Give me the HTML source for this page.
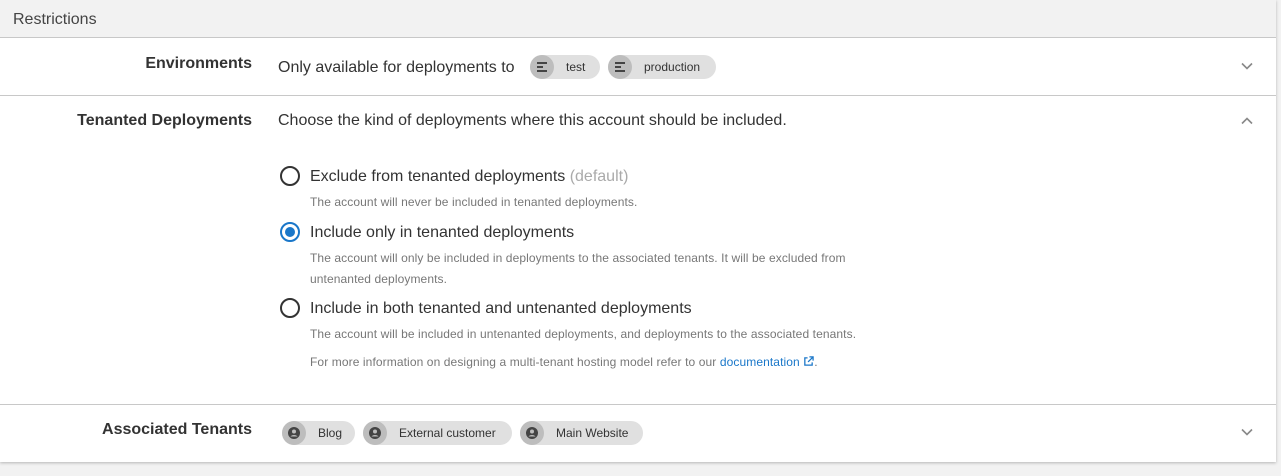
<!DOCTYPE html>
<html><head><style>
*{margin:0;padding:0;box-sizing:border-box}
body{width:1281px;height:476px;background:#f2f2f2;font-family:"Liberation Sans",sans-serif;color:#333;position:relative;overflow:hidden}
.card{position:absolute;left:0;top:0;width:1276px;height:462px;background:#fff;box-shadow:0 1px 3px rgba(0,0,0,.25)}
.hdr{position:absolute;left:0;top:0;width:1276px;height:38px;background:#f2f2f2;border-bottom:1px solid #c8c8c8}
.hdr span{position:absolute;left:13px;top:11px;font-size:16px;color:#444}
.line{position:absolute;left:0;width:1276px;height:1px;background:#c8c8c8}
.a{position:absolute;white-space:nowrap}
.lbl{right:1024px;font-weight:bold;font-size:16px;color:#333}
.t16{font-size:16px;color:#333}
.t12{font-size:12px;color:#777;letter-spacing:.1px}
.chip{position:absolute;height:24px;border-radius:12px;background:#e0e0e0;font-size:12px;color:#333;line-height:24px;white-space:nowrap}
.chip i{position:absolute;left:0;top:0;width:24px;height:24px;border-radius:12px;background:#bdbdbd}
.radio{position:absolute;width:20px;height:20px;border-radius:50%;border:2px solid #333}
.chev{position:absolute;left:1241px;width:12px;height:12px}
</style></head><body>
<div class="card">
<div class="hdr"><span>Restrictions</span></div>

<div class="a lbl" style="top:55px">Environments</div>
<div class="a t16" style="left:278px;top:59px">Only available for deployments to</div>
<div class="chip" style="left:530px;top:55px;width:70px"><i><svg width="24" height="24" viewBox="0 0 24 24"><rect x="7" y="7" width="10" height="2" fill="#444"/><rect x="7" y="11" width="6" height="2" fill="#444"/><rect x="7" y="15" width="10" height="2" fill="#444"/></svg></i><span style="position:absolute;left:36px">test</span></div>
<div class="chip" style="left:608px;top:55px;width:108px"><i><svg width="24" height="24" viewBox="0 0 24 24"><rect x="7" y="7" width="10" height="2" fill="#444"/><rect x="7" y="11" width="6" height="2" fill="#444"/><rect x="7" y="15" width="10" height="2" fill="#444"/></svg></i><span style="position:absolute;left:36px">production</span></div>
<svg class="chev" style="top:60px" viewBox="0 0 12 12"><path d="M1 3.5L6 8.5L11 3.5" stroke="#888" stroke-width="1.6" fill="none"/></svg>
<div class="line" style="top:95px"></div>

<div class="a lbl" style="top:112px">Tenanted Deployments</div>
<div class="a t16" style="left:278px;top:112px">Choose the kind of deployments where this account should be included.</div>
<svg class="chev" style="top:115px" viewBox="0 0 12 12"><path d="M1 8.5L6 3.5L11 8.5" stroke="#888" stroke-width="1.6" fill="none"/></svg>

<div class="radio" style="left:280px;top:166px"></div>
<div class="a t16" style="left:310px;top:168px">Exclude from tenanted deployments <span style="color:#aaa">(default)</span></div>
<div class="a t12" style="left:310px;top:195px">The account will never be included in tenanted deployments.</div>

<div class="radio" style="left:280px;top:222px;border-color:#1a77c9"><div style="position:absolute;left:3px;top:3px;width:10px;height:10px;border-radius:50%;background:#1a77c9"></div></div>
<div class="a t16" style="left:310px;top:224px">Include only in tenanted deployments</div>
<div class="a t12" style="left:310px;top:251px">The account will only be included in deployments to the associated tenants. It will be excluded from</div>
<div class="a t12" style="left:310px;top:272px">untenanted deployments.</div>

<div class="radio" style="left:280px;top:298px"></div>
<div class="a t16" style="left:310px;top:300px">Include in both tenanted and untenanted deployments</div>
<div class="a t12" style="left:310px;top:327px">The account will be included in untenanted deployments, and deployments to the associated tenants.</div>
<div class="a t12" style="left:310px;top:355px">For more information on designing a multi-tenant hosting model refer to our <span style="color:#1a77c9">documentation <svg width="11" height="11" viewBox="0 0 12 12" style="vertical-align:-1px"><path d="M5 2H2v8h8V7M7 1h4v4M11 1L5.5 6.5" stroke="#1a77c9" stroke-width="1.4" fill="none"/></svg></span>.</div>
<div class="line" style="top:404px"></div>

<div class="a lbl" style="top:421px">Associated Tenants</div>
<div class="chip" style="left:282px;top:421px;width:73px"><i><svg width="24" height="24" viewBox="0 0 24 24"><circle cx="12" cy="12" r="6" fill="#444"/><circle cx="12" cy="10.5" r="2" fill="#bdbdbd"/><path d="M8.5 15.5a4 3 0 0 1 7 0" fill="#bdbdbd"/></svg></i><span style="position:absolute;left:36px">Blog</span></div>
<div class="chip" style="left:363px;top:421px;width:149px"><i><svg width="24" height="24" viewBox="0 0 24 24"><circle cx="12" cy="12" r="6" fill="#444"/><circle cx="12" cy="10.5" r="2" fill="#bdbdbd"/><path d="M8.5 15.5a4 3 0 0 1 7 0" fill="#bdbdbd"/></svg></i><span style="position:absolute;left:36px">External customer</span></div>
<div class="chip" style="left:520px;top:421px;width:123px"><i><svg width="24" height="24" viewBox="0 0 24 24"><circle cx="12" cy="12" r="6" fill="#444"/><circle cx="12" cy="10.5" r="2" fill="#bdbdbd"/><path d="M8.5 15.5a4 3 0 0 1 7 0" fill="#bdbdbd"/></svg></i><span style="position:absolute;left:36px">Main Website</span></div>
<svg class="chev" style="top:426px" viewBox="0 0 12 12"><path d="M1 3.5L6 8.5L11 3.5" stroke="#888" stroke-width="1.6" fill="none"/></svg>
</div>
</body></html>
